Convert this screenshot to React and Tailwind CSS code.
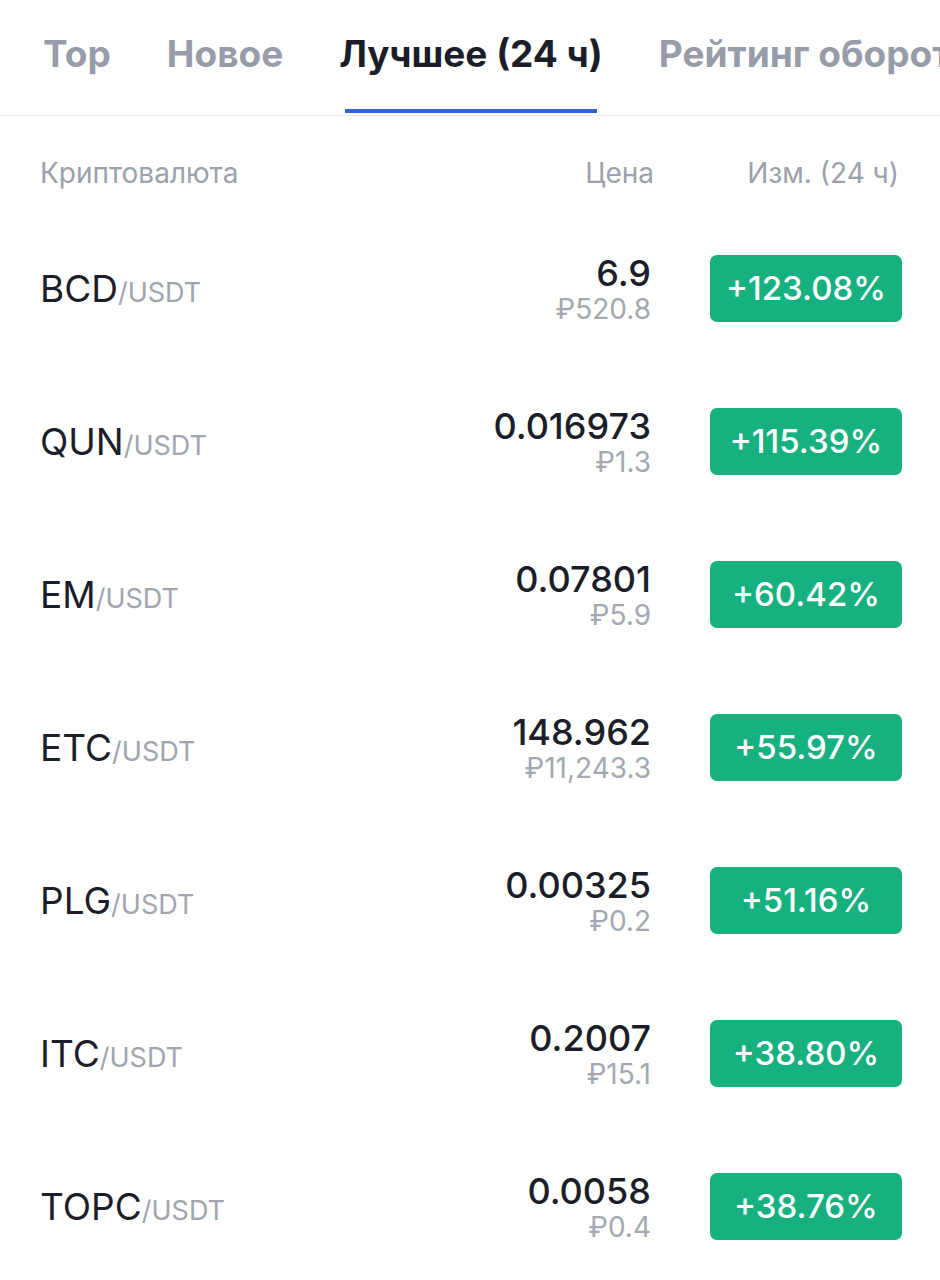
import React from 'react';

const tabs = [
    { label: 'Top' },
    { label: 'Новое' },
    { label: 'Лучшее (24 ч)', active: true },
    { label: 'Рейтинг оборота' },
];

const rows = [
    { base: 'BCD', price: '6.9', rub: '₽520.8', change: '+123.08%' },
    { base: 'QUN', price: '0.016973', rub: '₽1.3', change: '+115.39%' },
    { base: 'EM', price: '0.07801', rub: '₽5.9', change: '+60.42%' },
    { base: 'ETC', price: '148.962', rub: '₽11,243.3', change: '+55.97%' },
    { base: 'PLG', price: '0.00325', rub: '₽0.2', change: '+51.16%' },
    { base: 'ITC', price: '0.2007', rub: '₽15.1', change: '+38.80%' },
    { base: 'TOPC', price: '0.0058', rub: '₽0.4', change: '+38.76%' },
];

export default function App() {
    return (
        <div className="w-[940px] h-[1280px] overflow-hidden bg-white font-['Inter','Liberation_Sans',sans-serif]">
            {/* Tabs */}
            <div className="h-[116px] border-b border-[#ececef] flex items-end gap-[56px] pl-[43px] whitespace-nowrap overflow-hidden">
                {tabs.map((t) => (
                    <div key={t.label} className="flex flex-col items-center shrink-0">
                        <span className={`text-[37px] leading-[42px] font-bold ${t.active ? 'text-[#1b1e29]' : 'text-[#979ca8]'}`}>
                            {t.label}
                        </span>
                        <div className={`mt-[34px] h-[4px] w-[calc(100%-12px)] mb-[2px] ${t.active ? 'bg-[#2f64d3]' : 'bg-transparent'}`} />
                    </div>
                ))}
            </div>

            {/* Column headers */}
            <div className="h-[96px] flex pt-[39px] pl-[40px] pr-[41px] text-[28px] leading-[36px] text-[#9da1ab]">
                <div className="flex-1">Криптовалюта</div>
                <div>Цена</div>
                <div className="w-[245px] text-right">Изм. (24 ч)</div>
            </div>

            {/* Rows */}
            {rows.map((r) => (
                <div key={r.base} className="h-[153px] flex items-center pl-[40px] pr-[38px]">
                    <div className="flex-1 flex items-baseline">
                        <span className="text-[37px] text-[#1b1e29]">{r.base}</span>
                        <span className="text-[27px] text-[#a1a5ae]">/USDT</span>
                    </div>
                    <div className="flex flex-col items-end mr-[59px]">
                        <span className="text-[36px] leading-[40px] font-medium text-[#1b1e29]">{r.price}</span>
                        <span className="text-[28px] leading-[32px] text-[#a4a8b1]">{r.rub}</span>
                    </div>
                    <div className="w-[192px] h-[67px] rounded-[7px] bg-[#17b07f] flex items-center justify-center text-white text-[33px] font-medium">
                        {r.change}
                    </div>
                </div>
            ))}
        </div>
    );
}
